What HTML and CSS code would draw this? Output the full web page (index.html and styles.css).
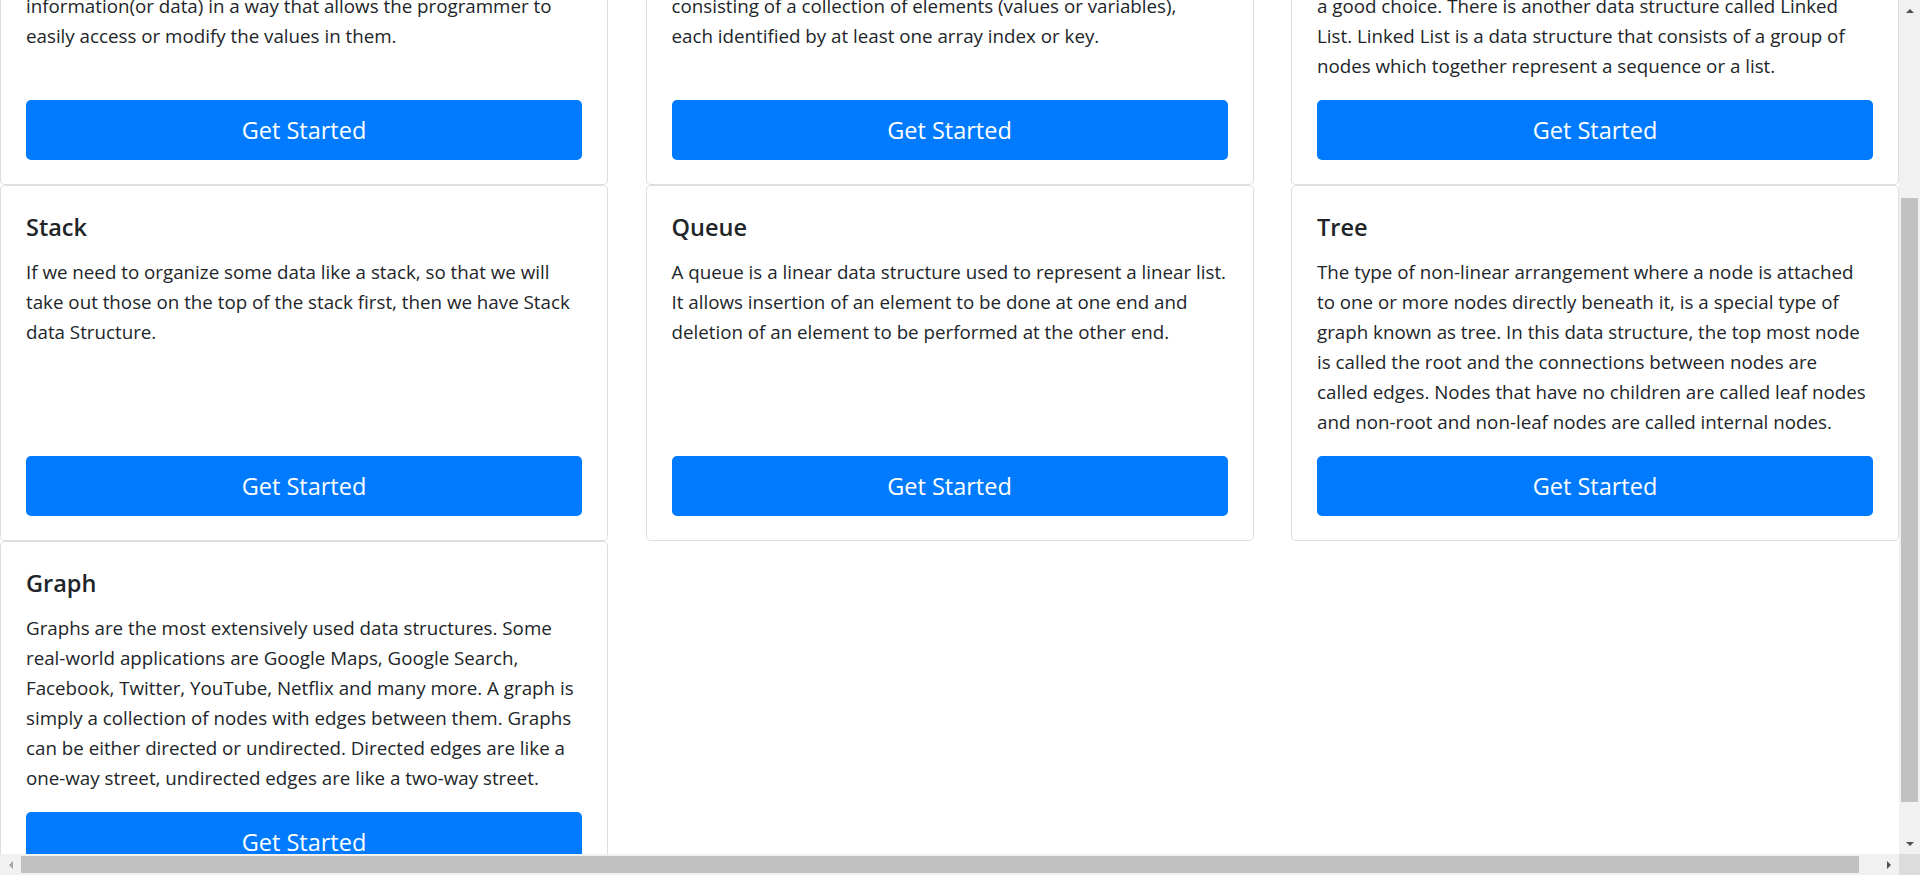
FILE: index.html
```html
<!DOCTYPE html>
<html lang="en">
<head>
<meta charset="utf-8">
<title>Data Structures</title>
<link rel="stylesheet" href="styles.css">
</head>
<body>
<div class="window">
  <div class="viewport" id="viewport">
    <header class="page-header">
      <h1 class="page-title">Data Structures</h1>
    </header>
    <main class="row">
      <div class="col">
        <article class="card">
          <h5 class="card-title">Introduction</h5>
          <p class="card-text">A data structure is a specialized format for organizing, processing, retrieving and storing data. It helps to store the information(or data) in a way that allows the programmer to easily access or modify the values in them.</p>
          <a href="#" class="btn">Get Started</a>
        </article>
      </div>
      <div class="col">
        <article class="card">
          <h5 class="card-title">Array</h5>
          <p class="card-text">An array is one of the most basic and widely used data structures. In computer science, an array is a data structure consisting of a collection of elements (values or variables),<br>each identified by at least one array index or key.</p>
          <a href="#" class="btn">Get Started</a>
        </article>
      </div>
      <div class="col">
        <article class="card">
          <h5 class="card-title">Linked List</h5>
          <p class="card-text">Like arrays, Linked List is a linear data structure. But when the size of the data to be saved changes frequently, an array is not a good choice. There is another data structure called Linked List. Linked List is a data structure that consists of a group of nodes which together represent a sequence or a list.</p>
          <a href="#" class="btn">Get Started</a>
        </article>
      </div>
      <div class="col">
        <article class="card">
          <h5 class="card-title">Stack</h5>
          <p class="card-text">If we need to organize some data like a stack, so that we will take out those on the top of the stack first, then we have Stack data Structure.</p>
          <a href="#" class="btn">Get Started</a>
        </article>
      </div>
      <div class="col">
        <article class="card">
          <h5 class="card-title">Queue</h5>
          <p class="card-text">A queue is a linear data structure used to represent a linear list. It allows insertion of an element to be done at one end and deletion of an element to be performed at the other end.</p>
          <a href="#" class="btn">Get Started</a>
        </article>
      </div>
      <div class="col">
        <article class="card">
          <h5 class="card-title">Tree</h5>
          <p class="card-text">The type of non-linear arrangement where a node is attached to one or more nodes directly beneath it, is a special type of graph known as tree. In this data structure, the top most node is called the root and the connections between nodes are<br>called edges. Nodes that have no children are called leaf nodes and non-root and non-leaf nodes are called internal nodes.</p>
          <a href="#" class="btn">Get Started</a>
        </article>
      </div>
      <div class="col">
        <article class="card">
          <h5 class="card-title">Graph</h5>
          <p class="card-text">Graphs are the most extensively used data structures. Some real-world applications are Google Maps, Google Search, Facebook, Twitter, YouTube, Netflix and many more. A graph is simply a collection of nodes with edges between them. Graphs can be either directed or undirected. Directed edges are like a one-way street, undirected edges are like a two-way street.</p>
          <a href="#" class="btn">Get Started</a>
        </article>
      </div>
    </main>
  </div>

  <div class="vbar">
    <div class="sb-btn">
      <svg width="8" height="4" viewBox="0 0 8 4"><polygon points="0,4 8,4 4,0" fill="#505050"/></svg>
    </div>
    <div class="vtrack"><div class="vthumb"></div></div>
    <div class="sb-btn">
      <svg width="8" height="4" viewBox="0 0 8 4"><polygon points="0,0 8,0 4,4" fill="#505050"/></svg>
    </div>
  </div>

  <div class="hbar">
    <div class="sb-btn">
      <svg width="4" height="8" viewBox="0 0 4 8"><polygon points="4,0 4,8 0,4" fill="#a3a3a3"/></svg>
    </div>
    <div class="htrack"><div class="hthumb"></div></div>
    <div class="sb-btn">
      <svg width="4" height="8" viewBox="0 0 4 8"><polygon points="0,0 0,8 4,4" fill="#505050"/></svg>
    </div>
  </div>

  <div class="corner"></div>
</div>
<script src="script.js"></script>
</body>
</html>
```

FILE: styles.css
```css
html, body {
  margin: 0;
  padding: 0;
  height: 100%;
  overflow: hidden;
}

body {
  font-family: "Open Sans", "Noto Sans", "Liberation Sans", sans-serif;
  font-size: 18.75px;
  line-height: 30px;
  color: #212529;
  background: #ffffff;
}

/* browser frame: content viewport plus classic scrollbars */
.window {
  display: grid;
  grid-template-columns: 1fr 21px;
  grid-template-rows: 1fr 21px;
  height: 100vh;
}

.viewport {
  overflow: hidden;
  min-width: 0;
  min-height: 0;
}

.page-header {
  height: 108px;
  display: flex;
  align-items: center;
  padding: 0 26px;
  box-sizing: border-box;
}

.page-title {
  margin: 0;
  font-size: 40px;
  font-weight: 600;
  line-height: 1.2;
}

.row {
  display: grid;
  grid-template-columns: repeat(3, 1fr);
  width: calc(100% + 37.5px);
  margin-left: -18.75px;
}

.col {
  padding: 0 18.75px;
  display: flex;
  min-width: 0;
}

.card {
  flex: 1;
  display: flex;
  flex-direction: column;
  padding: 26px 25px 24px;
  border: 1px solid rgba(0, 0, 0, 0.13);
  border-radius: 5px;
  background: #fff;
}

.card-title {
  margin: 0 0 15px;
  font-size: 23.5px;
  font-weight: 600;
  line-height: 30px;
  color: #212529;
}

.card-text {
  margin: 0 0 19px;
}

.btn {
  margin-top: auto;
  display: block;
  padding: 12px 16px;
  font-size: 23.5px;
  line-height: 36px;
  text-align: center;
  color: #fff;
  background: #007bff;
  border-radius: 5px;
  text-decoration: none;
}

/* scrollbars */
.vbar {
  display: flex;
  flex-direction: column;
  background: #f1f1f1;
}

.hbar {
  display: flex;
  background: #f1f1f1;
}

.sb-btn {
  flex: 0 0 21px;
  height: 21px;
  width: 21px;
  display: flex;
  align-items: center;
  justify-content: center;
}

.vtrack {
  flex: 1;
  display: flex;
  flex-direction: column;
  padding: 0 2px;
}

.vthumb {
  margin-top: 177px;
  height: 604px;
  background: #c1c1c1;
}

.htrack {
  flex: 1;
  display: flex;
  padding: 2px 0;
}

.hthumb {
  width: 1838px;
  background: #c1c1c1;
}

.corner {
  background: #dcdcdc;
}
```

FILE: script.js
```js
document.getElementById('viewport').scrollTop = 249;
```
